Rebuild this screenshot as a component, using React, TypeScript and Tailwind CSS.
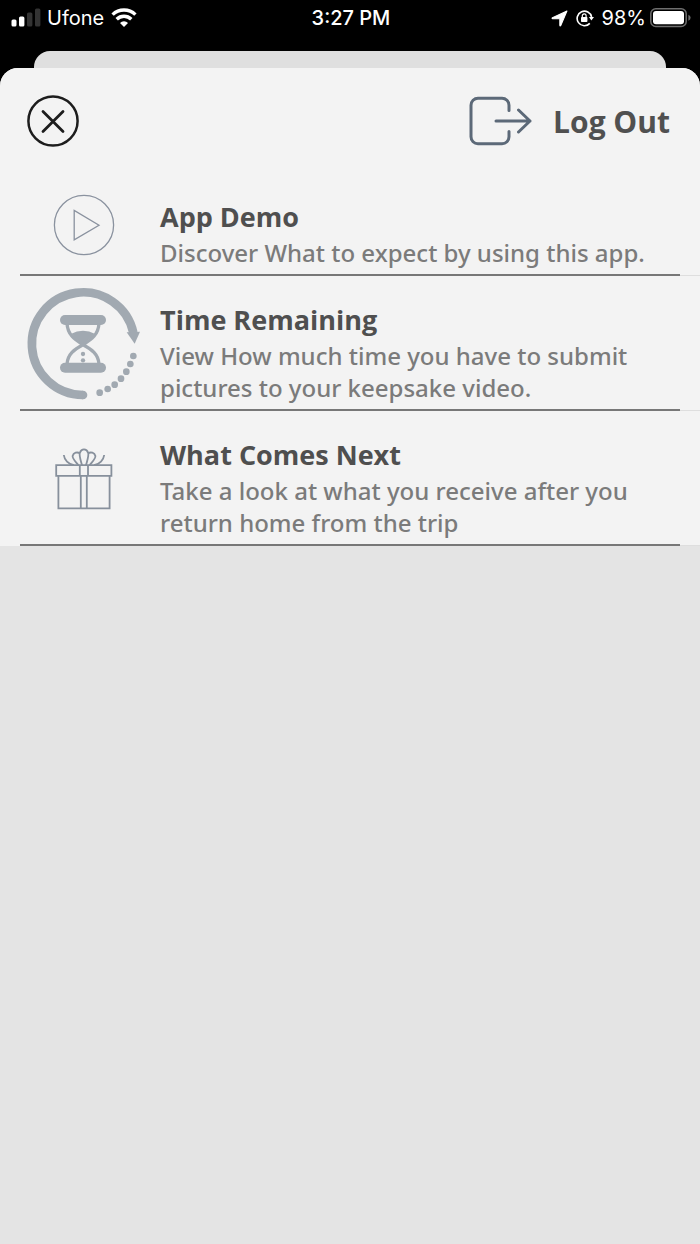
import type { ReactNode } from "react";

interface MenuItem {
  title: string;
  description: string;
  icon: ReactNode;
}

function SignalIcon() {
  return (
    <svg width="30" height="20" viewBox="0 0 30 20" aria-hidden="true">
      <rect x="0.5" y="11.5" width="5" height="7" rx="1.5" fill="#fff" />
      <rect x="8" y="8.5" width="5.4" height="10" rx="1.5" fill="#fff" />
      <rect x="16" y="4.5" width="5.4" height="14" rx="1.5" fill="#333" />
      <rect x="24" y="0.5" width="5.4" height="18" rx="1.5" fill="#333" />
    </svg>
  );
}

function WifiIcon() {
  return (
    <svg width="28" height="20" viewBox="-1 0 28 20" fill="none" aria-hidden="true">
      <path d="M1.6 6.6a16.4 16.4 0 0 1 22.8 0" stroke="#fff" strokeWidth="3.4" />
      <path d="M5.7 11.2a10.4 10.4 0 0 1 14.6 0" stroke="#fff" strokeWidth="3.4" />
      <path d="M9 15a5.6 5.6 0 0 1 8 0L13 19z" fill="#fff" />
    </svg>
  );
}

function LocationIcon() {
  return (
    <svg width="17" height="17" viewBox="0 0 16 16" aria-hidden="true">
      <path d="M15 1 9.2 14.6q-.6 1-.9-.2V8.2H1.6q-1.1-.2-.2-.9z" fill="#fff" stroke="#fff" strokeLinejoin="round" />
    </svg>
  );
}

function RotationLockIcon() {
  return (
    <svg width="18" height="18" viewBox="0 0 18 18" fill="none" aria-hidden="true">
      <path d="M13.8 14.4A7.3 7.3 0 1 1 15.6 8" stroke="#fff" strokeWidth="1.6" />
      <path d="M12.9 8H18l-2.6 3.6z" fill="#fff" />
      <rect x="5" y="8" width="6.4" height="5" rx="0.8" fill="#fff" />
      <path d="M6.3 8.4V6.8a1.9 1.9 0 0 1 3.8 0v1.6" stroke="#fff" strokeWidth="1.2" />
    </svg>
  );
}

function BatteryIcon() {
  return (
    <svg width="41" height="20" viewBox="0 0 41 20" fill="none" aria-hidden="true">
      <rect x="0.8" y="0.8" width="35.4" height="17.6" rx="5" stroke="#6e6e6e" strokeWidth="1.5" />
      <rect x="3" y="3" width="31" height="13.2" rx="3" fill="#fff" />
      <path d="M38.4 6.8q2.2.8 2.2 3t-2.2 3z" fill="#6e6e6e" />
    </svg>
  );
}

function CloseIcon() {
  return (
    <svg width="52" height="52" viewBox="0 0 52 52" fill="none" stroke="#1d1d1d" aria-hidden="true">
      <circle cx="26" cy="26" r="24.6" strokeWidth="2.5" />
      <path d="M16 16.5 36 36.5M36 16.5 16 36.5" strokeWidth="2.8" strokeLinecap="round" />
    </svg>
  );
}

function LogOutIcon() {
  return (
    <svg
      width="64"
      height="50"
      viewBox="0 0 64 50"
      fill="none"
      stroke="#5c6978"
      strokeWidth="3"
      strokeLinecap="round"
      strokeLinejoin="round"
      aria-hidden="true"
    >
      <path d="M40 14.5V9.2a7 7 0 0 0-7-7H9a7 7 0 0 0-7 7v31.6a7 7 0 0 0 7 7h24a7 7 0 0 0 7-7v-5.3" />
      <path d="M27 25h34M49.5 14 61 25 49.5 36" />
    </svg>
  );
}

function PlayIcon() {
  return (
    <svg width="62" height="62" viewBox="0 0 62 62" fill="none" stroke="#8a929f" strokeWidth="1.3" aria-hidden="true">
      <circle cx="31" cy="31" r="29.6" />
      <path d="M21.2 16.4v29.4L46 31.2z" />
    </svg>
  );
}

function HourglassIcon() {
  return (
    <svg width="118" height="118" viewBox="30 15 354 354" fill="none" aria-hidden="true">
      <path d="M204 345A154 154 0 1 1 355 158" stroke="#a1a9b1" strokeWidth="26" />
      <g fill="#a1a9b1">
        <circle cx="204" cy="345" r="13" />
        <path d="M335 157 375 155 359 191z" />
        <circle cx="355" cy="228" r="10" />
        <circle cx="346" cy="252" r="10" />
        <circle cx="334" cy="275" r="10" />
        <circle cx="318" cy="296" r="10" />
        <circle cx="299" cy="314" r="10" />
        <circle cx="278" cy="327" r="10" />
        <circle cx="254" cy="338" r="10" />
        <rect x="135" y="105" width="138" height="30" rx="15" />
        <rect x="135" y="248" width="138" height="30" rx="15" />
        <path d="M169 161q16-9 35-9t35 9q-10 14-26 24l-9 8-9-8q-16-10-26-24z" />
        <circle cx="204" cy="222" r="6.5" />
        <circle cx="204" cy="241" r="6.5" />
      </g>
      <path
        d="M156 130c2 34 22 48 48 64 26-16 46-30 48-64M156 252c2-30 22-44 48-58 26 14 46 28 48 58"
        stroke="#a1a9b1"
        strokeWidth="10"
      />
    </svg>
  );
}

function GiftIcon() {
  return (
    <svg width="58" height="62" viewBox="0 0 58 62" fill="none" stroke="#87909c" strokeWidth="1.8" aria-hidden="true">
      <path d="M1.2 17.2h55.2v10.6H1.2zM3.4 27.8h51.2v32.6H3.4z" />
      <path d="M24.8 17.2v10.6M33 17.2v10.6M25.8 27.8v32.6M31.8 27.8v32.6" />
      <path d="M27 17.2C25.6 12 24 7.6 24.8 5c1.6-4.8 6.8-4.8 8.4 0C34 7.6 32.4 12 31 17.2" />
      <path d="M23.4 17.2C20 13 17.2 10.4 17.6 8c.8-3.6 4.8-4.2 7.2-2.8M34.6 17.2c3.4-4.2 6.2-6.8 5.8-9.2-.8-3.6-4.8-4.2-7.2-2.8" />
      <path d="M8.8 7c.6 5 4.6 9.4 10.2 10.2M49.2 7c-.6 5-4.6 9.4-10.2 10.2" />
    </svg>
  );
}

const menuItems: MenuItem[] = [
  {
    title: "App Demo",
    description: "Discover What to expect by using this app.",
    icon: <PlayIcon />,
  },
  {
    title: "Time Remaining",
    description: "View How much time you have to submit pictures to your keepsake video.",
    icon: <HourglassIcon />,
  },
  {
    title: "What Comes Next",
    description: "Take a look at what you receive after you return home from the trip",
    icon: <GiftIcon />,
  },
];

function StatusBar() {
  return (
    <div className="grid grid-cols-3 items-center h-9 pl-[11px] pr-[9px] font-['Inter',sans-serif] text-xl text-white">
      <div className="flex items-center gap-1.5">
        <SignalIcon />
        <span>Ufone</span>
        <WifiIcon />
      </div>
      <div className="text-center font-medium">3:27 PM</div>
      <div className="flex items-center justify-end gap-2">
        <LocationIcon />
        <RotationLockIcon />
        <div className="flex items-center gap-1">
          <span>98%</span>
          <BatteryIcon />
        </div>
      </div>
    </div>
  );
}

function MenuRow({ title, description, icon }: MenuItem) {
  return (
    <li className="flex pl-5">
      <a href="#" className="flex flex-1 border-b-2 border-[#777777]">
        <span className="flex w-32 shrink-0 items-center justify-center pt-0.5">{icon}</span>
        <span className="flex-1 pt-[26px] pb-[5px] pl-3">
          <span className="block text-[27px] leading-9 font-bold text-[#4f4f4f]">{title}</span>
          <span className="mt-0.5 block font-['Noto_Sans',sans-serif] text-2xl leading-8 font-medium text-[#7b7b7b]">
            {description}
          </span>
        </span>
      </a>
      <div className="w-5 border-b border-[#dedede]" />
    </li>
  );
}

export default function App() {
  return (
    <div className="flex min-h-screen flex-col bg-black font-['Open_Sans',sans-serif]">
      <StatusBar />
      {/* edge of the sheet stacked behind */}
      <div className="mx-[34px] mt-[15px] h-[17px] rounded-t-2xl bg-[#dfdfdf]" />
      <main className="flex flex-1 flex-col overflow-hidden rounded-t-[18px] bg-[#e4e4e4]">
        <div className="bg-[#f3f3f3]">
          <header className="flex h-[105px] items-center justify-between pr-[30px] pl-[27px]">
            <button type="button" aria-label="Close">
              <CloseIcon />
            </button>
            <button type="button" className="flex items-center gap-5 text-3xl font-bold text-[#505050]">
              <LogOutIcon />
              <span className="pt-0.5">Log Out</span>
            </button>
          </header>
          <ul>
            {menuItems.map((item) => (
              <MenuRow key={item.title} {...item} />
            ))}
          </ul>
        </div>
      </main>
    </div>
  );
}
